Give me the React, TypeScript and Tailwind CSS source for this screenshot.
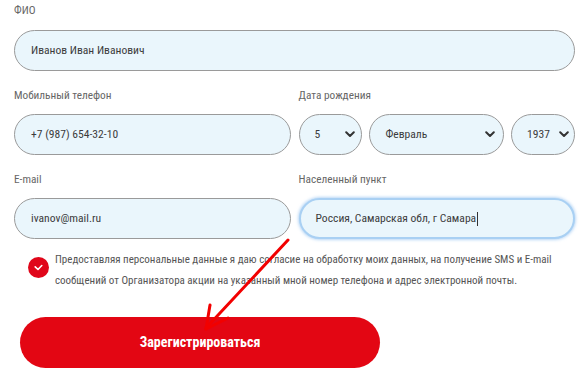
import { ReactNode } from 'react';

const inputBox =
    'h-[41px] rounded-full border border-[#9a9a9a] bg-[#eaf6fc] flex items-center text-[11.6px] text-[#3c3c3c]';

function Label({ children }: { children: ReactNode }) {
    return <div className="text-[11.3px] leading-[16px] text-[#666]">{children}</div>;
}

function Chevron() {
    return (
        <svg width="10" height="7" viewBox="0 0 10 7" className="shrink-0">
            <path d="M1.2 1.2 L5 5 L8.8 1.2" fill="none" stroke="#333" strokeWidth="2" strokeLinecap="round" strokeLinejoin="round" />
        </svg>
    );
}

function SelectBox({ value, className, chevronPad }: { value: string; className: string; chevronPad: string }) {
    return (
        <div className={`${inputBox} ${className} justify-between pl-[15px] ${chevronPad}`}>
            <span>{value}</span>
            <Chevron />
        </div>
    );
}

export default function App() {
    return (
        <div className="relative w-[585px] h-[375px] overflow-hidden bg-white font-['Roboto_Condensed','DejaVu_Sans_Condensed',Roboto,sans-serif] font-stretch-condensed">
            <div className="pl-[14px] pr-[10px] pt-[3px]">
                <Label>ФИО</Label>
                <div className={`${inputBox} mt-[11px] pl-[16px]`}>Иванов Иван Иванович</div>

                <div className="grid grid-cols-2 gap-x-[8px] mt-[17px]">
                    <div>
                        <Label>Мобильный телефон</Label>
                        <div className={`${inputBox} mt-[10px] pl-[16px]`}>+7 (987) 654-32-10</div>
                    </div>
                    <div>
                        <Label>Дата рождения</Label>
                        <div className="mt-[10px] flex gap-[7px]">
                            <SelectBox value="5" className="w-[64px]" chevronPad="pr-[6px]" />
                            <SelectBox value="Февраль" className="w-[135px]" chevronPad="pr-[8px]" />
                            <SelectBox value="1937" className="w-[64px]" chevronPad="pr-[5px]" />
                        </div>
                    </div>
                </div>

                <div className="grid grid-cols-2 gap-x-[8px] mt-[17px]">
                    <div>
                        <Label>E-mail</Label>
                        <div className={`${inputBox} mt-[10px] pl-[16px]`}>ivanov@mail.ru</div>
                    </div>
                    <div>
                        <Label>Населенный пункт</Label>
                        <div className="mt-[10px] h-[41px] rounded-full border-2 border-[#a9d0f3] bg-[#eaf6fc] shadow-[0_0_3px_1px_rgba(140,190,240,0.6)] flex items-center pl-[15px] text-[11.6px] text-[#3c3c3c]">
                            Россия, Самарская обл, г Самара
                            <span className="ml-[1px] w-px h-[14px] bg-[#333]" />
                        </div>
                    </div>
                </div>

                <div className="mt-[10px] flex items-start gap-[6px] pl-[14px]">
                    <div className="mt-[8px] w-[21px] h-[21px] shrink-0 rounded-full bg-[#e0061a] flex items-center justify-center">
                        <svg width="9" height="7" viewBox="0 0 9 7">
                            <path d="M1.2 2.8 L4 5.5 L7.8 1.5" fill="none" stroke="#fff" strokeWidth="1.6" strokeLinecap="round" strokeLinejoin="round" />
                        </svg>
                    </div>
                    <p className="text-[11px] leading-[21px] text-[#555] whitespace-nowrap">
                        Предоставляя персональные данные я даю согласие на обработку моих данных, на получение SMS и E-mail
                        <br />
                        сообщений от Организатора акции на указанный мной номер телефона и адрес электронной почты.
                    </p>
                </div>

                <button className="mt-[26px] ml-[6px] w-[360px] h-[51px] rounded-full bg-[#e30613] text-white text-[14px] font-bold">
                    Зарегистрироваться
                </button>
            </div>

            <svg className="absolute inset-0 pointer-events-none" width="585" height="375" viewBox="0 0 585 375">
                <g stroke="#f20000" strokeWidth="3" strokeLinecap="round" fill="none">
                    <path d="M288 240 L206 328" />
                    <path d="M206 329 L210 305" />
                    <path d="M206 329 L228 318" />
                </g>
            </svg>
        </div>
    );
}
